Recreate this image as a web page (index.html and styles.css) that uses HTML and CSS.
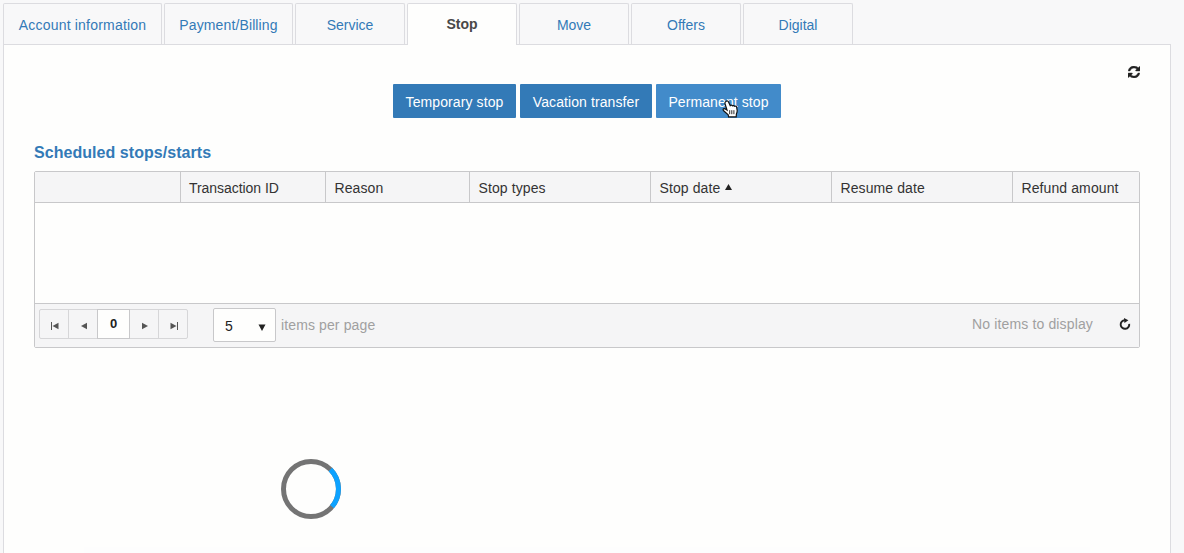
FILE: index.html
```html
<!DOCTYPE html>
<html lang="en">
<head>
<meta charset="utf-8">
<title>Stop</title>
<link rel="stylesheet" href="styles.css">
</head>
<body>
<nav class="tabs">
  <a class="tab tab-account"><span>Account information</span></a>
  <a class="tab tab-payment"><span>Payment/Billing</span></a>
  <a class="tab"><span>Service</span></a>
  <a class="tab active"><span>Stop</span></a>
  <a class="tab"><span>Move</span></a>
  <a class="tab"><span>Offers</span></a>
  <a class="tab"><span>Digital</span></a>
</nav>
<main class="panel">
  <div class="tools">
    <svg class="sync" width="12" height="12" viewBox="0 0 1536 1536"><path fill="#222" stroke="#222" stroke-width="50" d="M1511 928q0 5-1 7-64 268-268 434.500T764 1536q-146 0-282.500-55T238 1324l-129 129q-19 19-45 19t-45-19-19-45V960q0-26 19-45t45-19h448q26 0 45 19t19 45-19 45l-137 137q71 66 161 102t187 36q134 0 250-65t186-179q11-17 53-117 8-23 30-23h192q13 0 22.500 9.500t9.500 22.500zM1536 128v448q0 26-19 45t-45 19h-448q-26 0-45-19t-19-45 19-45l138-138Q969 256 768 256q-134 0-250 65T332 500q-11 17-53 117-8 23-30 23H50q-13 0-22.500-9.500T18 608v-7q65-268 270-434.500T768 0q146 0 284 55.500T1297 212l130-129q19-19 45-19t45 19 19 45z"/></svg>
  </div>
  <div class="actions">
    <button class="btn b-temp">Temporary stop</button>
    <button class="btn b-vac">Vacation transfer</button>
    <button class="btn b-perm">Permanent stop<svg class="cursor" width="16" height="18" viewBox="0 0 16 18"><path d="M4.200 1.200c.9-.5 1.800-.2 2.200.6L8.200 5.600c.6-.7 1.700-.6 2.200.2.700-.5 1.600-.3 2.100.5 1-.4 2 .1 2.200 1.100l.5 3.200c.1 1.300-.3 2.200-.8 3.300l-.2 3H6.600l-.4-2-4.300-3.900c-.9-.8-1-1.700-.4-2.200.7-.5 1.600-.1 2.300.5l1.200.8-2-6.300c-.3-.9 0-2 1.200-2.600z" fill="#fff" stroke="#111" stroke-width="1.200"/><path d="M7.700 10.200v4M9.800 10.200v4M11.900 10.200v4" stroke="#111" stroke-width=".9" fill="none"/></svg></button>
  </div>
  <h2 class="title">Scheduled stops/starts</h2>
  <section class="grid">
    <div class="head">
      <div class="col"></div>
      <div class="col tid">Transaction ID</div>
      <div class="col">Reason</div>
      <div class="col">Stop types</div>
      <div class="col">Stop date<svg class="sort" width="7" height="6" viewBox="0 0 7 6"><path d="M3.500 0L7 6H0z" fill="#222"/></svg></div>
      <div class="col">Resume date</div>
      <div class="col">Refund amount</div>
    </div>
    <div class="rows"></div>
    <div class="pager">
      <div class="pages">
        <a class="page"><svg width="8" height="8" viewBox="0 0 8 8"><path d="M.5 0v8" stroke="#555"/><path d="M7.500.7v6.600L1.500 4z" fill="#555"/></svg></a>
        <a class="page"><svg width="8" height="8" viewBox="0 0 8 8"><path d="M7 .7v6.600L1 4z" fill="#555"/></svg></a>
        <a class="page current">0</a>
        <a class="page"><svg width="8" height="8" viewBox="0 0 8 8"><path d="M1 .7v6.600L7 4z" fill="#555"/></svg></a>
        <a class="page"><svg width="8" height="8" viewBox="0 0 8 8"><path d="M7.500 0v8" stroke="#555"/><path d="M.5.700v6.600l6-3.300z" fill="#555"/></svg></a>
      </div>
      <div class="select"><span>5</span><svg width="8" height="7" viewBox="0 0 8 7"><path d="M.5.500h7L4 7z" fill="#222"/></svg></div>
      <span class="per">items per page</span>
      <span class="none">No items to display</span>
      <svg class="reload" width="12" height="12" viewBox="0 0 12 12"><path d="M5.800 2.200A4.300 4.300 0 1 0 10.200 5.800" fill="none" stroke="#222" stroke-width="1.900"/><path d="M5 0l4.400 2.200L5.400 5z" fill="#222"/></svg>
    </div>
  </section>
  <svg class="spinner" width="60" height="60" viewBox="0 0 60 60"><circle cx="30" cy="30" r="27.500" fill="none" stroke="#747474" stroke-width="5"/><path d="M49.400 10.600A27.500 27.500 0 0 1 51 47.700" fill="none" stroke="#0da2ff" stroke-width="5"/></svg>
  <div class="shade"></div>
</main>
</body>
</html>
```
FILE: styles.css
```css
* { box-sizing: border-box; }
body {
  margin: 0;
  height: 553px;
  padding: 3px 13px 0 3px;
  overflow: hidden;
  background: #f8f8f9;
  color: #333;
  font: 14px/20px "Liberation Sans", Arial, sans-serif;
}
.tabs { display: flex; gap: 2px; height: 41px; }
.tab {
  display: flex;
  align-items: center;
  justify-content: center;
  width: 110px;
  height: 41px;
  padding-top: 2px;
  border: 1px solid #dcdce0;
  border-bottom: 0;
  border-radius: 2px 2px 0 0;
  background: #f8f8f9;
  color: #337ab7;
}
.tab-account { width: 159px; letter-spacing: 0.2px; }
.tab-payment { width: 129px; letter-spacing: 0.12px; }
.tab.active {
  position: relative;
  height: 42px;
  padding: 0 0 1px;
  background: #fefefd;
  color: #484848;
  font-weight: bold;
}
.panel {
  height: 509px;
  padding: 21px 30px 0;
  border: 1px solid #dcdce0;
  border-bottom: 0;
  background: #fefefd;
}
.tools { display: flex; justify-content: flex-end; height: 18px; }
.actions { display: flex; justify-content: center; gap: 4px; height: 34px; }
.btn {
  position: relative;
  width: 123px;
  padding: 2px 0 0;
  border: 0;
  border-radius: 1px;
  background: #337ab7;
  color: #fff;
  font: inherit;
  letter-spacing: 0.1px;
  white-space: nowrap;
}
.b-vac { width: 132px; }
.b-perm { width: 125px; background: #428bca; }
.cursor { position: absolute; left: 66px; top: 16px; }
.title {
  margin: 25px 0 8px;
  color: #337ab7;
  font-size: 16px;
  line-height: 20px;
  letter-spacing: 0.05px;
}
.grid {
  height: 177px;
  border: 1px solid #c8c8ca;
  border-radius: 2px;
}
.head {
  display: grid;
  grid-template-columns: 145px 145px 144px 181px 181px 181px 1fr;
  height: 31px;
  border-bottom: 1px solid #c8c8ca;
  background: #f5f5f6;
}
.col {
  padding: 6px 0 0 8.5px;
  border-left: 1px solid #c8c8ca;
  letter-spacing: 0.1px;
  white-space: nowrap;
}
.col:first-child { border-left: 0; }
.col.tid { padding-left: 8px; letter-spacing: -0.05px; }
.sort { margin: 0 0 3px 5px; }
.rows { height: 100px; }
.pager {
  display: flex;
  height: 44px;
  padding: 4px 8px 0 4px;
  border-top: 1px solid #c8c8ca;
  background: #f5f5f6;
  color: #a0a0a0;
}
.pages {
  display: flex;
  width: 149px;
  height: 30px;
  margin-top: 1px;
  border: 1px solid #d6d6d8;
  border-radius: 2px;
}
.page {
  display: flex;
  align-items: center;
  justify-content: center;
  flex: none;
  width: 29px;
  padding: 4px 0 0 1px;
  border-right: 1px solid #d6d6d8;
}
.page:last-child { border-right: 0; }
.page.current {
  width: 33px;
  margin: -1px 0 -1px -1px;
  padding: 0 0 0 0;
  border: 1px solid #c8c8ca;
  background: #fefefd;
  color: #222;
  font-size: 13px;
  font-weight: bold;
}
.select {
  display: flex;
  align-items: center;
  justify-content: space-between;
  width: 63px;
  height: 34px;
  margin-left: 25px;
  padding: 2px 9px 0 11px;
  border: 1px solid #c8c8ca;
  border-radius: 2px;
  background: #fefefd;
  color: #222;
}
.select svg { margin-top: 2px; }
.per { margin: 7px 0 0 5px; letter-spacing: 0.12px; }
.none { margin: 6px 0 0 auto; letter-spacing: 0.14px; }
.reload { margin: 10px 0 0 26px; }
.spinner { display: block; margin: 111px 0 0 247px; }
.shade { height: 6px; margin: 28px 50px 0; background: #fdfdfd; }
```
